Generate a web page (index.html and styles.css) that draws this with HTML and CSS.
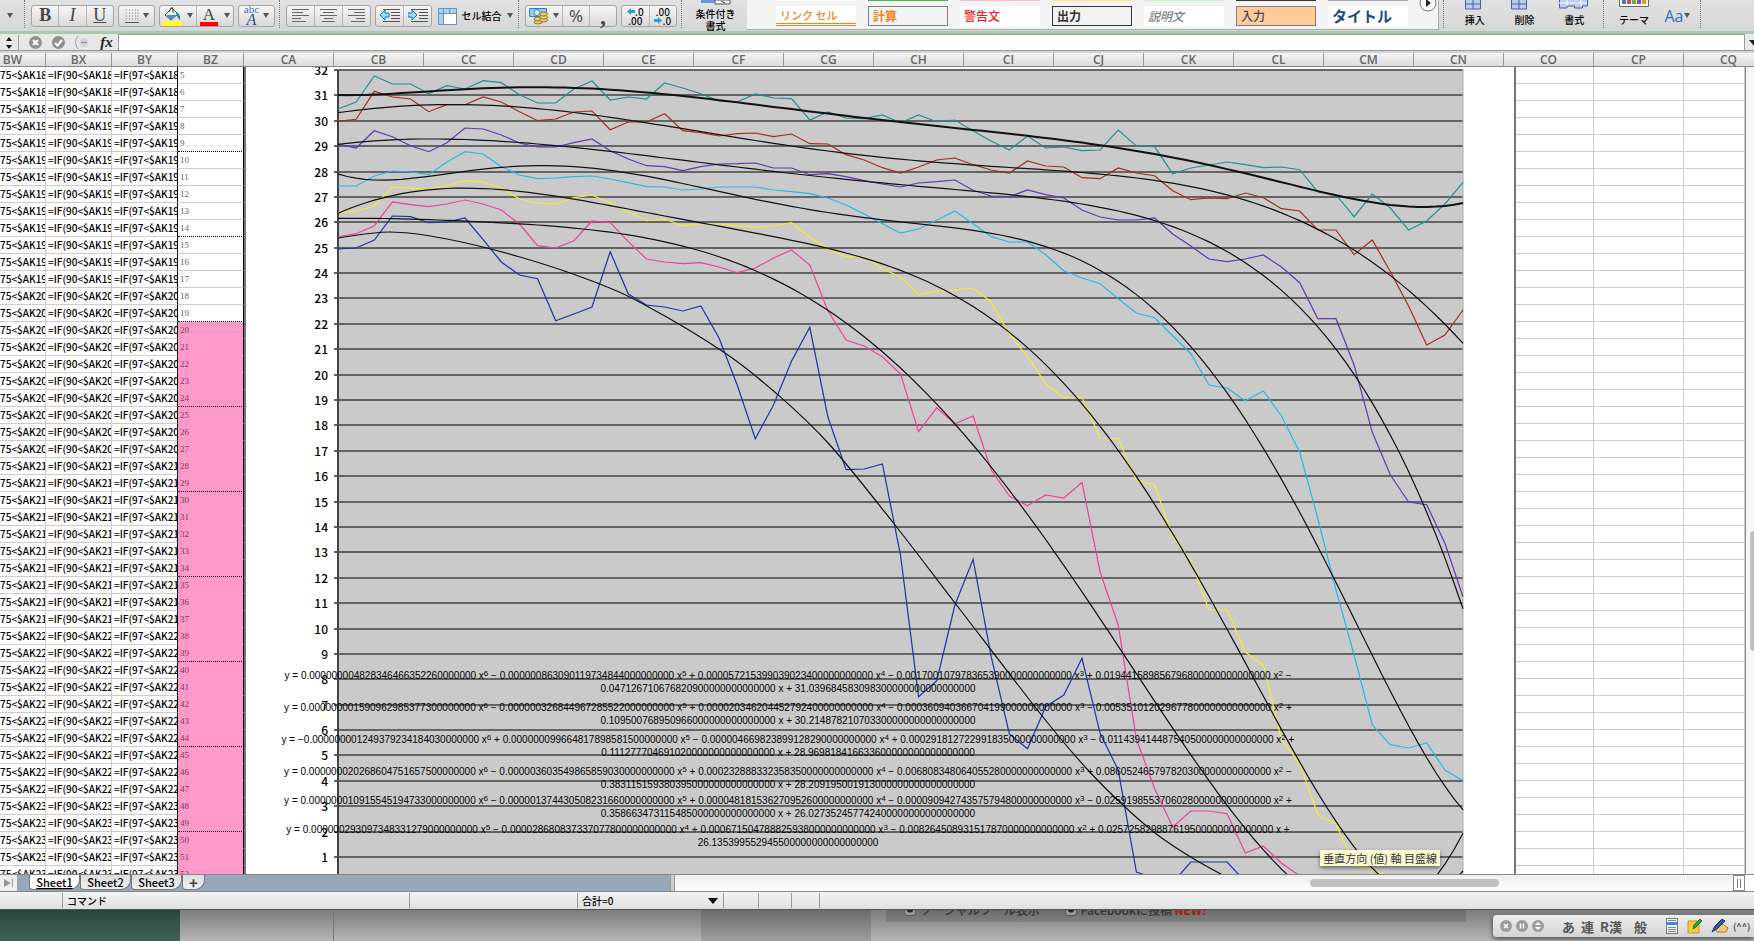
FILE: index.html
```html
<!DOCTYPE html>
<html lang="ja">
<head>
  <meta charset="UTF-8">
  <meta name="viewport" content="width=device-width, initial-scale=1.0">
  <title>Sheet1</title>
  <link rel="stylesheet" href="styles.css">
</head>
<body>

  <!-- Ribbon -->
  <div class="toolbar">
    <button class="plain first" aria-label="More"><span class="caret"></span></button>
    <span class="sep"></span>
    <div class="group g-biu">
      <button class="bold">B</button>
      <button class="italic">I</button>
      <button class="underline">U</button>
    </div>
    <div class="group g-border">
      <button aria-label="Borders">
        <svg width="14" height="14" viewBox="0 0 14 14"><path d="M1 .5v12M4.5 .5v12M7.5 .5v12M10.500 .5v12M13 .5v12" stroke="#777" stroke-dasharray="1 2"/><path d="M0 13.500h14" stroke="#555"/></svg>
        <span class="caret"></span>
      </button>
    </div>
    <div class="group g-fill">
      <button aria-label="Fill color">
        <svg width="20" height="20" viewBox="0 0 20 20"><path d="M3 9l7-7 6 6-7 6z" fill="#f4f4f4" stroke="#444"/><path d="M7 6l2-4q2-2 2 2v3" fill="none" stroke="#444"/><path d="M4 9h11l-6 5z" fill="#4c8fd0"/><path d="M14 6q4 1 4 8q-3-2-4-8" fill="#2a6cb8"/><path d="M0 15h20v5H0z" fill="#ffff30"/></svg>
      </button>
      <button class="narrow" aria-label="Fill options"><span class="caret"></span></button>
      <button class="font-color" aria-label="Font color">A</button>
      <button class="narrow" aria-label="Font color options"><span class="caret"></span></button>
    </div>
    <div class="group g-abc">
      <button class="abc"><span class="abc-text"><small>abc</small><i>A</i></span><span class="caret"></span></button>
    </div>
    <span class="sep"></span>
    <div class="group g-align">
      <button aria-label="Left"><svg width="17" height="15" viewBox="0 0 17 15"><path d="M0 1.500h17M0 4.500h11M0 7.500h17M0 10.500h9M0 13.500h14" stroke="#666"/></svg></button>
      <button aria-label="Center"><svg width="17" height="15" viewBox="0 0 17 15"><path d="M0 1.500h17M3 4.500h11M0 7.500h17M4 10.500h9M2 13.500h13" stroke="#666"/></svg></button>
      <button aria-label="Right"><svg width="17" height="15" viewBox="0 0 17 15"><path d="M0 1.500h17M6 4.500h11M0 7.500h17M8 10.500h9M3 13.500h14" stroke="#666"/></svg></button>
    </div>
    <div class="group g-indent">
      <button aria-label="Outdent"><svg width="20" height="15" viewBox="0 0 20 15"><path d="M3 1.500h17M11 4.500h9M11 7.500h9M11 10.500h9M3 13.500h17" stroke="#555"/><path d="M0 7l5-5v3h4v4H5v3z" fill="#8fe0ff" stroke="#1878b8"/></svg></button>
      <button aria-label="Indent"><svg width="20" height="15" viewBox="0 0 20 15"><path d="M3 1.500h17M11 4.500h9M11 7.500h9M11 10.500h9M3 13.500h17" stroke="#555"/><path d="M9 7L4 2v3H0v4h4v3z" fill="#8fe0ff" stroke="#1878b8"/></svg></button>
    </div>
    <button class="plain merge">
      <svg width="19" height="18" viewBox="0 0 19 18"><path d="M.5 1.500h18v16H.5z" fill="#fff" stroke="#6a90b8"/><path d="M1 2h17v4H1zM1 6h4v11H1z" fill="#a9d2f0"/><path d="M5.500 2v15M1 6.500h17M11.500 2v4" stroke="#6a90b8"/></svg>
      セル結合<span class="caret"></span>
    </button>
    <span class="sep"></span>
    <div class="group g-number">
      <button class="money" aria-label="Currency">
        <svg width="20" height="18" viewBox="0 0 20 18"><path d="M.5 1.500h17v8H.5z" fill="#8ccdf0" stroke="#3a80b8"/><circle cx="8" cy="5.500" r="3" fill="#d9f0fb" stroke="#3a80b8"/><g fill="#e8cf78" stroke="#907020"><ellipse cx="9" cy="15" rx="4" ry="2"/><ellipse cx="9" cy="12" rx="4" ry="2"/><ellipse cx="14.500" cy="13" rx="4" ry="2"/><ellipse cx="14.500" cy="10" rx="4" ry="2"/><ellipse cx="14.500" cy="7" rx="4" ry="2"/></g></svg>
        <span class="caret"></span>
      </button>
      <button class="percent">%</button>
      <button class="comma">,</button>
    </div>
    <div class="group g-decimal">
      <button class="decimal"><span><svg width="8" height="7" viewBox="0 0 8 7"><path d="M0 3.500L4 0v2h4v3H4v2z" fill="#28a0e0"/></svg>.0</span><span>.00</span></button>
      <button class="decimal"><span>.00</span><span><svg width="8" height="7" viewBox="0 0 8 7"><path d="M8 3.500L4 0v2H0v3h4v2z" fill="#28a0e0"/></svg>.0</span></button>
    </div>
    <span class="sep"></span>
    <button class="plain stack conditional">
      <svg width="30" height="5" viewBox="0 0 30 5"><path d="M0 0h14v3H0z" fill="#6d94d4"/><path d="M14 0h15v4H14z" fill="#fff" stroke="#555"/><path d="M20 1l4 2" stroke="#333"/></svg>
      <span>条件付き</span><span>書式</span>
    </button>
    <div class="gallery">
      <span class="edge"></span><span class="edge green"></span><span class="edge pink"></span><span class="edge yellow"></span><span class="edge mint"></span><span class="edge dark"></span><span class="edge gray"></span>
      <button class="style linked">リンク セル</button>
      <button class="style calc">計算</button>
      <button class="style warning">警告文</button>
      <button class="style output">出力</button>
      <button class="style note">説明文</button>
      <button class="style input-style">入力</button>
      <button class="style title-style">タイトル</button>
      <button class="more" aria-label="More styles"><svg width="18" height="18" viewBox="0 0 18 18"><circle cx="9" cy="9" r="8" fill="#fafafa" stroke="#777"/><path d="M7 5l5 4-5 4z" fill="#222"/></svg></button>
    </div>
    <span class="sep"></span>
    <div class="cells">
      <button class="plain stack"><svg width="30" height="11" viewBox="0 0 30 11"><path d="M5.500-1h15v10h-15z" fill="#b9cdf4" stroke="#46629a"/><path d="M13 0v9M5 4h15" stroke="#46629a"/></svg><span>挿入</span></button>
      <button class="plain stack"><svg width="30" height="11" viewBox="0 0 30 11"><path d="M1.500-1h15v10h-15z" fill="#b9cdf4" stroke="#46629a"/><path d="M9 0v9M1 4h15" stroke="#46629a"/></svg><span>削除</span></button>
      <button class="plain stack"><svg width="30" height="11" viewBox="0 0 30 11"><path d="M.5-1h28v7h-5v2h-8V6H8v2H.5z" fill="#b9cdf4" stroke="#46629a"/><path d="M8 0v6M22 0v6M0 3h28" stroke="#fff"/></svg><span>書式</span></button>
    </div>
    <span class="sep"></span>
    <div class="themes">
      <button class="plain stack"><svg width="30" height="11" viewBox="0 0 30 11"><path d="M.5-1h29v7.500H.5z" fill="#fff" stroke="#666"/><path d="M3 0h4v4H3z" fill="#4a78c0"/><path d="M8 0h4v4H8z" fill="#d05040"/><path d="M13 0h4v4h-4z" fill="#70a840"/><path d="M18 0h4v4h-4z" fill="#8050a8"/><path d="M23 0h4v4h-4z" fill="#e89030"/></svg><span>テーマ</span></button>
      <button class="plain fonts">Aa<span class="caret"></span></button>
    </div>
    <span class="sep"></span>
  </div>

  <!-- Formula bar -->
  <div class="formula-bar">
    <button class="stepper" aria-label="Name box"><svg width="6" height="12" viewBox="0 0 6 12"><path d="M0 4l3-4 3 4zM0 8l3 4 3-4z" fill="#111"/></svg></button>
    <button class="round" aria-label="Cancel"><svg width="13" height="13" viewBox="0 0 13 13"><circle cx="6.500" cy="6.500" r="6.500" fill="#909090"/><path d="M4 4l5 5M9 4l-5 5" stroke="#fff" stroke-width="2"/></svg></button>
    <button class="round" aria-label="Enter"><svg width="13" height="13" viewBox="0 0 13 13"><circle cx="6.500" cy="6.500" r="6.500" fill="#909090"/><path d="M3 7l2.500 2.500L10 4" fill="none" stroke="#fff" stroke-width="2"/></svg></button>
    <button class="round" aria-label="Builder"><svg width="15" height="15" viewBox="0 0 15 15"><path d="M4 1Q-1 7.500 4 14" fill="none" stroke="#999"/><circle cx="10" cy="7.500" r="4.500" fill="#d4d4dc"/><path d="M7 7.500h6" stroke="#888"/></svg></button>
    <label class="fx" for="formula">fx</label>
    <input id="formula" class="formula" type="text">
    <button class="expand" aria-label="Expand"><svg width="9" height="6" viewBox="0 0 9 6"><path d="M4 0h10L9 6z" fill="#222"/></svg></button>
  </div>

  <div class="col-heads" id="colHeads"></div>

  <!-- Cells on both sides of the chart object -->
  <div class="sheet">
    <table class="cells-left"><tbody id="leftRows"></tbody></table>
    <div class="chart">
      <svg id="plot" class="plot" width="1268" height="830" viewBox="0 0 1268 830"></svg>
      <div id="equations"></div>
      <div class="tooltip">垂直方向 (値) 軸 目盛線</div>
    </div>
    <table class="cells-right"><tbody id="rightRows"></tbody></table>
    <div class="v-scroll"><div class="v-thumb"></div></div>
  </div>

  <div class="tab-bar">
    <button class="last-sheet" aria-label="Last sheet"><svg width="10" height="8" viewBox="0 0 10 8"><path d="M0 0l7 4-7 4zM8 0h1v8H8z" fill="#999"/></svg></button>
    <div class="tabs">
      <button class="tab active">Sheet1</button>
      <button class="tab">Sheet2</button>
      <button class="tab">Sheet3</button>
      <button class="tab add" aria-label="Add sheet">+</button>
    </div>
    <div class="splitter"></div>
    <div class="h-scroll"><div class="h-thumb"></div></div>
    <div class="grip"></div>
    <div class="corner"></div>
  </div>

  <div class="status">
    <span class="seg s-empty"></span>
    <span class="seg s-command">コマンド</span>
    <span class="seg s-wide"></span>
    <span class="seg s-sum"><select aria-label="集計"><option>合計=0</option></select><span class="caret"></span></span>
    <span class="seg s-a"></span>
    <span class="seg s-b"></span>
    <span class="seg s-c"></span>
    <span class="seg s-rest"></span>
  </div>

  <!-- Whatever shows below the window -->
  <div class="desktop">
    <div class="wall"></div>
    <div class="page-a"></div>
    <div class="page-b"></div>
    <div class="page-c"></div>
    <div class="page-d">
      <div class="share">
        <label><input type="checkbox" checked>ソーシャルツール表示</label>
        <label><input type="checkbox" checked>Facebookに投稿 <b>NEW!</b></label>
      </div>
    </div>
    <div class="ime">
      <button aria-label="Close"><svg width="12" height="12" viewBox="0 0 12 12"><circle cx="6" cy="6" r="6" fill="#9c9ca0"/><path d="M4 4l4 4M8 4L4 8" stroke="#fff" stroke-width="1.500"/></svg></button>
      <button aria-label="Pause"><svg width="12" height="12" viewBox="0 0 12 12"><circle cx="6" cy="6" r="6" fill="#9c9ca0"/><path d="M4.500 3.500v5M7.500 3.500v5" stroke="#fff" stroke-width="1.500"/></svg></button>
      <button aria-label="Resize"><svg width="12" height="12" viewBox="0 0 12 12"><circle cx="6" cy="6" r="6" fill="#9c9ca0"/><path d="M3 5l3-3 3 3zM3 7l3 3 3-3z" fill="#fff"/></svg></button>
      <span class="mode first-mode">あ</span><span class="mode">連</span><span class="mode">R漢</span><span class="mode last-mode">般</span>
      <button class="tool" aria-label="List"><svg width="14" height="16" viewBox="0 0 14 16"><path d="M1.500.5h11v15h-11z" fill="#eee" stroke="#777"/><path d="M1 4h12v3H1z" fill="#3c8ae0"/><path d="M3 2.500h8M3 9.500h8M3 11.500h8M3 13.500h8" stroke="#888"/></svg></button>
      <button class="tool" aria-label="Note"><svg width="16" height="16" viewBox="0 0 16 16"><path d="M1 3h11v12H1z" fill="#f6c940" stroke="#c89820"/><path d="M6 11l1-4 6-6 2 2-6 6z" fill="#3ca040" stroke="#207028"/></svg></button>
      <button class="tool" aria-label="Pen"><svg width="18" height="16" viewBox="0 0 18 16"><path d="M3 9l9-3 5 4-2 4H6z" fill="#efc978" stroke="#a07830"/><path d="M1 14l3-6 7-7 3 2-7 7z" fill="#3858b0" stroke="#203070"/></svg></button>
      <span class="face">(^^)</span>
    </div>
  </div>

  <script src="chart.js"></script>
</body>
</html>
```
FILE: styles.css
```css
* {
  box-sizing: border-box;
}

body {
  margin: 0;
  height: 100vh;
  display: flex;
  flex-direction: column;
  overflow: hidden;
  font-family: "Noto Sans CJK JP", sans-serif;
  font-size: 10px;
  font-weight: 500;
  color: #000;
  background: #9a9a9a;
}

button {
  margin: 0;
  padding: 0;
  border: 0;
  background: none;
  font: inherit;
  color: inherit;
  white-space: nowrap;
  display: flex;
  align-items: center;
  justify-content: center;
}

svg {
  display: block;
  flex: none;
}

/* Ribbon */
.toolbar {
  flex: none;
  display: flex;
  align-items: center;
  gap: 4px;
  height: 31px;
  overflow: hidden;
  background: linear-gradient(#e2e2e2, #d6d6d6);
}

.toolbar > * {
  flex: none;
}

.caret {
  border: 3px solid transparent;
  border-top: 5px solid #555;
  border-bottom: 0;
}

.first {
  width: 20px;
}

.sep {
  width: 3px;
  height: 28px;
  align-self: flex-start;
  border-left: 1px dotted #777;
}

.group {
  display: flex;
  height: 22px;
  border: 1px solid #a4a4a4;
  border-radius: 3px;
  background: linear-gradient(#f6f6f6, #d8d8d8);
}

.group button {
  flex: 1;
  gap: 4px;
  color: #444;
  border-left: 1px solid #b4b4b4;
}

.group button:first-child {
  border-left: 0;
}

.group button.narrow {
  flex: none;
  width: 12px;
  border-left: 0;
}

.g-biu { width: 83px; font-family: "Liberation Serif", serif; font-size: 18px; }
.g-border { width: 37px; }
.g-fill { width: 75px; }
.g-abc { width: 37px; }
.g-align { width: 85px; }
.g-indent { width: 57px; }
.g-number { width: 92px; }
.g-decimal { width: 56px; }

.bold { font-weight: bold; }
.italic { font-style: italic; }
.underline { text-decoration: underline; }

.group .font-color {
  font-family: "Liberation Serif", serif;
  font-size: 17px;
  line-height: 17px;
  background: linear-gradient(#f00, #f00) center bottom / 18px 4px no-repeat;
  align-items: flex-start;
}

.abc-text {
  display: flex;
  flex-direction: column;
  align-items: center;
  font-family: "Liberation Serif", serif;
  font-size: 16px;
  line-height: 13px;
  color: #2a4f86;
}

.abc-text small {
  font-size: 11px;
  line-height: 7px;
  color: #3a78c8;
}

.merge {
  width: 78px;
  gap: 5px;
}

.group .money {
  flex: none;
  width: 36px;
}

.percent {
  font-family: "Open Sans", sans-serif;
  font-size: 17px;
}

.comma {
  font-family: "Liberation Serif", serif;
  font-size: 24px;
  font-weight: bold;
  line-height: 8px;
}

.group .decimal {
  flex-direction: column;
  gap: 0;
  line-height: 9px;
  color: #111;
}

.decimal span {
  display: flex;
  align-items: center;
}

.stack {
  flex-direction: column;
  justify-content: flex-start;
  align-self: flex-start;
  line-height: 12px;
}

.conditional {
  width: 55px;
}

.conditional svg {
  margin-bottom: 3px;
}

.gallery {
  width: 692px;
  height: 30px;
  align-self: flex-start;
  display: grid;
  grid-template-columns: repeat(7, 80px) 20px;
  grid-template-rows: 1px 20px;
  gap: 5px 12px;
  padding-left: 29px;
  background: #f3f3f3;
  border: solid #aaa;
  border-width: 0 1px 1px 0;
}

.edge { background: #fff; }
.edge.green { background: #4cb84c; }
.edge.pink { background: #ffc0c8; }
.edge.yellow { background: #ffe490; }
.edge.mint { background: #c4f0c8; }
.edge.dark { background: #333; }
.edge.gray { background: #aaa; }

.style {
  grid-row: 2;
  height: 20px;
  padding-left: 4px;
  justify-content: flex-start;
  font-size: 12px;
  line-height: 16px;
  background: #fff;
}

.linked { color: #f58220; font-size: 11px; border-bottom: 3px double #f58220; }
.calc { color: #f58220; font-weight: bold; background: #f2f2f2; border: 1px solid #7f7f7f; }
.warning { color: #f02020; }
.output { color: #333; font-weight: bold; background: #f2f2f2; border: 1px solid #333; }
.note { color: #7f7f7f; font-style: italic; }
.input-style { color: #3f3f76; background: #ffcc99; border: 1px solid #7f7f7f; }
.title-style { color: #1f497d; font-size: 15px; font-weight: bold; }

.more {
  grid-column: 8;
  grid-row: 1;
  height: 12px;
  margin-left: -4px;
  align-items: flex-end;
}

.cells {
  width: 149px;
  align-self: flex-start;
  display: flex;
}

.cells button {
  width: 50px;
  gap: 3px;
}

.themes {
  width: 86px;
  align-self: stretch;
  display: flex;
}

.themes .stack {
  width: 48px;
  gap: 3px;
}

.fonts {
  width: 38px;
  font-family: "Open Sans", sans-serif;
  font-size: 16px;
  color: #2f6fc0;
}

/* Formula bar */
.formula-bar {
  flex: none;
  display: flex;
  align-items: center;
  height: 22px;
  border-top: 3px solid #a9c8b0;
  border-bottom: 2px solid #d4d4d4;
  background: #e8e8e8;
  box-shadow: inset 0 -1px #999;
}

.stepper {
  width: 19px;
  height: 16px;
  border-right: 1px solid #999;
}

.round {
  width: 23px;
  margin-left: 5px;
  margin-right: -5px;
}

.fx {
  width: 30px;
  padding-left: 7px;
  text-align: center;
  font: italic bold 15px "Liberation Serif", serif;
  color: #222;
}

.formula {
  flex: 1;
  align-self: stretch;
  min-width: 0;
  padding: 0 4px;
  font: inherit;
  background: #fff;
  border: 1px solid #999;
  outline: 0;
}

.expand {
  width: 9px;
}

/* Column headings */
.col-heads {
  flex: none;
  display: flex;
  height: 14px;
  overflow: hidden;
  background: linear-gradient(#f4f4f4, #dcdcdc);
  border-bottom: 1px solid #888;
  font: 600 12px/14px "Open Sans", sans-serif;
  color: #666;
  text-align: center;
}

.col-heads span {
  flex: none;
  width: 90px;
  border-right: 1px solid #999;
}

.col-heads .w-bw {
  width: 46px;
  padding-right: 20px;
}

.col-heads .w-narrow {
  width: 66px;
}

/* Sheet */
.sheet {
  flex: 1;
  min-height: 0;
  display: flex;
  overflow: hidden;
  background: #fff;
  border-bottom: 1px solid #888;
}

table {
  flex: none;
  align-self: flex-start;
  table-layout: fixed;
  border-collapse: separate;
  border-spacing: 0;
}

td {
  height: 17px;
  padding: 0;
  line-height: 16px;
  white-space: nowrap;
  overflow: hidden;
  border-right: 1px solid #ccc;
  border-bottom: 1px solid #ccc;
}

.cells-left {
  width: 244px;
}

.c-bw { width: 46px; }
.c-formula { width: 66px; padding-left: 2px; }

.cells-left .c-formula + .c-formula {
  border-right-color: #000;
}

.cells-left .c-num {
  width: 66px;
  padding-left: 2px;
  font: 9px/16px "Liberation Serif", serif;
  color: #666;
  border-right-color: #000;
}

.cells-left .c-num.pink {
  background: #ff99c9;
  border-bottom-color: #ff99c9;
  color: #704058;
}

.cells-left .c-num.mark {
  border-bottom: 1px dotted #000;
}

.cells-right {
  flex: 1;
}

.cells-right td:first-child {
  width: 78px;
}

.cells-right td:nth-child(2) {
  width: 90px;
}

.chart {
  flex: none;
  position: relative;
  width: 1272px;
  height: 100%;
  overflow: hidden;
  border: solid #777;
  border-width: 0 2px;
  background: #fff;
}

.plot {
  overflow: hidden;
}

.grid-line {
  stroke: #646464;
  stroke-width: 2;
  shape-rendering: crispEdges;
}

.series,
.trend {
  fill: none;
  stroke-width: 1.2px;
}

.trend {
  stroke: #111;
}

.trend.heavy {
  stroke-width: 2px;
}

.axis-label {
  font-size: 12px;
  text-anchor: end;
}

/* Trendline labels lie over the plot area */
.equation {
  position: absolute;
  left: 0;
  width: 1084px;
  text-align: center;
  white-space: nowrap;
  font-family: "Liberation Sans", sans-serif;
  line-height: 13px;
}

.equation sup {
  font-size: 8px;
  line-height: 0;
  vertical-align: 3px;
}

.tooltip {
  position: absolute;
  right: 74px;
  bottom: 8px;
  padding: 0 3px;
  font-size: 11px;
  font-weight: 400;
  line-height: 16px;
  white-space: nowrap;
  background: rgba(255, 255, 214, 0.92);
  color: #333;
  box-shadow: 0 2px 4px rgba(0, 0, 0, 0.5);
}

.v-scroll {
  flex: none;
  width: 9px;
  border-left: 1px solid #888;
  background: #f6f6f6;
  padding: 464px 0 0 4px;
}

.v-thumb {
  height: 120px;
  border-radius: 4px 0 0 4px;
  background: #c0c0c0;
}

/* Sheet tabs and scroll bar */
.tab-bar {
  flex: none;
  display: flex;
  height: 17px;
  background: #98a7b9;
  border-bottom: 1px solid #888;
}

.last-sheet {
  width: 17px;
  background: #eee;
}

.tabs {
  width: 653px;
  padding-left: 12px;
  display: flex;
}

.tab {
  width: 51px;
  height: 15px;
  border: 1px solid #777;
  border-top: 0;
  border-radius: 0 0 10px 4px;
  background: linear-gradient(#ddd, #f0f0f0);
  font-size: 11px;
}

.tab.active {
  background: #fff;
  text-decoration: underline;
}

.tab.add {
  width: 23px;
  font-size: 15px;
  font-weight: bold;
  color: #444;
}

.splitter {
  width: 5px;
  background: #ccc;
  border: solid #999;
  border-width: 0 1px;
}

.h-scroll {
  flex: 1;
  display: flex;
  justify-content: flex-end;
  padding: 4px 234px 4px 0;
  background: linear-gradient(#eee, #fff);
}

.h-thumb {
  width: 189px;
  border-radius: 4px;
  background: #c0c0c0;
}

.grip {
  width: 12px;
  border: 1px solid #888;
  background: linear-gradient(90deg, #777 1px, transparent 1px 3px, #777 3px 4px, transparent 4px) 3px 3px / 4px 9px no-repeat #fff;
}

.corner {
  width: 9px;
  background: #fff;
}

/* Status bar */
.status {
  flex: none;
  display: flex;
  height: 18px;
  padding: 1px 0;
  background: linear-gradient(#f2f2f2, #dfe0e2);
  border-bottom: 1px solid #555;
}

.seg {
  flex: none;
  padding-left: 4px;
  line-height: 16px;
  border-right: 1px solid #999;
}

.s-empty { width: 63px; }
.s-command { width: 347px; }
.s-wide { width: 168px; }
.s-a { width: 35px; }
.s-b { width: 33px; }
.s-c { width: 28px; }
.s-rest { flex: 1; border: 0; }

.s-sum {
  width: 146px;
  display: flex;
  align-items: center;
}

.s-sum select {
  width: 126px;
  height: 15px;
  padding: 0;
  border: 0;
  appearance: none;
  font: inherit;
  background: none;
}

.s-sum .caret {
  border-width: 6px 5px 0;
  border-top-color: #000;
}

/* Desktop */
.desktop {
  flex: none;
  position: relative;
  display: flex;
  height: 31px;
  overflow: hidden;
  background: linear-gradient(#7c7c7c, #b6b6b6);
}

.wall {
  width: 180px;
  background: linear-gradient(#2c443c, #3f6357);
}

.page-a { width: 154px; border-right: 1px solid #777; }
.page-b { width: 367px; }
.page-c { width: 170px; background: rgba(0, 0, 0, 0.13); }

.page-d {
  flex: 1;
  padding-left: 15px;
}

.share {
  width: 580px;
  height: 12px;
  overflow: hidden;
  display: flex;
  align-items: flex-end;
  gap: 25px;
  padding: 0 0 3px 18px;
  font-size: 12px;
  line-height: 18px;
  color: #333;
  background: rgba(0, 0, 0, 0.13);
}

.share label {
  display: flex;
  align-items: center;
  white-space: pre;
}

.share input {
  width: 12px;
  height: 12px;
  margin: 0 4px 0 0;
  appearance: none;
  border: 1px solid #555;
  border-radius: 3px;
  background: radial-gradient(circle at 50% 40%, #222 3px, transparent 4px) #999;
}

.share b {
  color: #a81818;
}

/* Input palette floating over the desktop */
.ime {
  position: absolute;
  right: 0;
  top: 5px;
  width: 261px;
  height: 22px;
  display: flex;
  align-items: center;
  gap: 4px;
  padding-left: 7px;
  overflow: hidden;
  white-space: nowrap;
  background: linear-gradient(#eee, #d4d4d4);
  border-radius: 4px 0 0 4px;
  box-shadow: 0 2px 5px rgba(0, 0, 0, 0.6);
  color: #555;
}

.mode {
  font-size: 13px;
  font-weight: bold;
  margin-right: 2px;
}

.first-mode { margin-left: 14px; }
.last-mode { margin: 0 14px 0 6px; }
.tool { margin-right: 4px; }

.face {
  margin-left: -4px;
  font-size: 9px;
  font-weight: bold;
}
```
FILE: chart.js
```js
// Column headings
const heads = ['BW', 'BX', 'BY', 'BZ', 'CA', 'CB', 'CC', 'CD', 'CE', 'CF', 'CG', 'CH', 'CI',
  'CJ', 'CK', 'CL', 'CM', 'CN', 'CO', 'CP', 'CQ'];
const colHeads = document.getElementById('colHeads');
heads.forEach((name, i) => {
  const span = document.createElement('span');
  span.textContent = name;
  if (i === 0) span.className = 'w-bw';
  else if (i < 4) span.className = 'w-narrow';
  colHeads.appendChild(span);
});

// Rows left and right of the chart
function addCell(row, text, className) {
  const td = row.insertCell();
  td.textContent = text;
  if (className) td.className = className;
}

const leftRows = document.getElementById('leftRows');
const rightRows = document.getElementById('rightRows');
for (let n = 5; n <= 52; n++) {
  const ref = '$AK' + Math.floor((n + 182) / 10);
  const row = leftRows.insertRow();
  addCell(row, '75<' + ref, 'c-bw');
  addCell(row, '=IF(90<' + ref, 'c-formula');
  addCell(row, '=IF(97<' + ref, 'c-formula');
  addCell(row, n, 'c-num' + (n >= 20 ? ' pink' : '') + (n % 5 === 4 ? ' mark' : ''));

  const right = rightRows.insertRow();
  for (let c = 0; c < 3; c++) addCell(right, '');
}

// Chart geometry
const LEFT = 92;
const RIGHT = 1217;
const TOP = 3;
const STEP = 25.387; // height of one unit on the value axis
const plot = document.getElementById('plot');
const xAt = i => LEFT + i * (RIGHT - LEFT) / 62;
const yAt = v => TOP + (32 - v) * STEP;

function draw(tag, attrs, text) {
  const el = document.createElementNS('http://www.w3.org/2000/svg', tag);
  for (const key in attrs) el.setAttribute(key, attrs[key]);
  if (text) el.textContent = text;
  plot.appendChild(el);
}

draw('rect', { x: LEFT, y: TOP, width: RIGHT - LEFT, height: 830, fill: '#cacaca' });
for (let v = 32; v > 0; v--) {
  const y = Math.round(yAt(v));
  draw('line', { x1: LEFT - 4, x2: RIGHT, y1: y, y2: y, class: 'grid-line' });
  draw('text', { x: LEFT - 10, y: y + 5, class: 'axis-label' }, String(v));
}
draw('line', { x1: LEFT, x2: LEFT, y1: TOP, y2: 830, stroke: '#444', 'stroke-width': 2 });
draw('line', { x1: RIGHT, x2: RIGHT, y1: TOP, y2: 830, stroke: '#aaa' });

// Series, as depth below the top of the axis in thirds of a pixel (offset 30)
const series = {
  '#1b9292': [147, 126, 48, 72, 72, 101, 77, 87, 62, 68, 104, 129, 129, 87, 63, 120, 111, 117, 69, 84, 101,
    123, 126, 102, 114, 116, 180, 156, 174, 176, 165, 188, 165, 185, 180, 213, 243, 270, 228, 264, 261, 272,
    270, 210, 258, 260, 341, 324, 315, 306, 314, 323, 321, 329, 396, 404, 470, 402, 444, 510, 483, 432, 367],
  '#a82a20': [184, 178, 94, 111, 117, 155, 134, 134, 111, 126, 155, 182, 177, 156, 153, 209, 186, 186, 161,
    212, 218, 228, 221, 219, 230, 222, 251, 252, 284, 300, 323, 339, 321, 300, 294, 314, 330, 339, 303, 318,
    321, 353, 356, 324, 339, 347, 392, 419, 414, 416, 399, 413, 446, 453, 510, 510, 584, 540, 635, 738, 855,
    825, 750],
  '#6236b4': [252, 264, 212, 230, 257, 275, 248, 204, 207, 225, 249, 261, 261, 248, 237, 272, 297, 317, 320,
    332, 320, 312, 311, 309, 324, 324, 344, 341, 350, 362, 372, 381, 369, 365, 360, 391, 408, 410, 390, 404,
    414, 450, 471, 480, 480, 474, 522, 558, 597, 605, 597, 585, 621, 668, 776, 776, 915, 1117, 1245, 1326,
    1334, 1450, 1610],
  '#22b8e8': [378, 378, 348, 333, 336, 344, 306, 275, 282, 320, 345, 356, 354, 350, 348, 357, 368, 380, 381,
    390, 387, 381, 381, 381, 390, 395, 401, 414, 435, 462, 491, 519, 507, 480, 453, 491, 530, 546, 546, 584,
    632, 654, 671, 716, 759, 773, 827, 881, 975, 984, 1022, 993, 1068, 1177, 1375, 1590, 1785, 1995, 2054,
    2064, 2049, 2130, 2162],
  '#f6ec30': [457, 453, 438, 381, 384, 389, 375, 362, 366, 384, 417, 429, 432, 413, 405, 429, 456, 482, 477,
    497, 492, 492, 497, 501, 498, 488, 531, 567, 590, 591, 626, 651, 704, 693, 690, 684, 726, 824, 890, 971,
    1014, 1011, 1134, 1136, 1262, 1274, 1430, 1502, 1650, 1650, 1776, 1815, 2040, 2110, 2264, 2292, 2415,
    2430, 2450],
  '#f0409c': [531, 521, 497, 426, 434, 440, 432, 420, 432, 450, 492, 557, 564, 542, 483, 488, 545, 597, 606,
    611, 608, 621, 638, 624, 594, 570, 615, 752, 840, 858, 890, 942, 1115, 1043, 1091, 1068, 1230, 1308,
    1337, 1305, 1314, 1267, 1536, 1695, 2037, 2185, 2301, 2253, 2253, 2261, 2379, 2358, 2410, 2447, 2480],
  '#1a34a8': [567, 564, 540, 468, 470, 488, 486, 474, 539, 606, 645, 656, 782, 762, 741, 575, 702, 735, 741,
    753, 738, 834, 975, 1136, 1035, 903, 802, 1071, 1229, 1227, 1212, 1485, 1910, 1862, 1635, 1498, 1790,
    2022, 2066, 1940, 1905, 1795, 2020, 2130, 2436, 2455, 2468, 2406, 2406, 2406, 2465]
};
for (const color in series) {
  const points = series[color].map((d, i) => xAt(i).toFixed(1) + ',' + (TOP + (d - 30) / 3).toFixed(1));
  draw('polyline', { points: points.join(' '), class: 'series', stroke: color });
}

// Trendlines: sign and coefficient, highest power first; top is the label position
const trends = [
  { top: 602, c: ['0.00000000482834646635226', '-0.000000863090119734844', '0.0000572153990390234',
    '-0.00170010797836539', '0.0194415898567968', '-0.0471267106768209', '31.0396845830983'] },
  { top: 634, c: ['0.0000000015909629853773', '-0.000000326844967285522', '0.0000203462044527924',
    '-0.000360940366704199', '-0.0053510120296778', '0.109500768950966', '30.2148782107033'] },
  { top: 666, c: ['-0.00000000124937923418403', '0.0000000996648178985815', '-0.00000466982389912829',
    '0.000291812722991835', '-0.0114394144875405', '0.11127770469102', '28.9698184166336'] },
  { top: 698, c: ['0.0000000202686047516575', '-0.00000360354986585903', '0.000232888332358350',
    '-0.00680834806405528', '0.0860524657978203', '-0.383115159380395', '28.209195001913'] },
  { top: 727, c: ['0.000000010915545194733', '-0.00000137443050823166', '0.0000481815362709526',
    '-0.0000909427435757948', '-0.0259198553706028', '0.358663473115485', '26.0273524577424'] },
  { top: 756, c: ['0.000000293097348331279', '-0.0000286808373370778', '0.000671504788825938',
    '-0.00826450893151787', '0.0257258298876195', '26.1353995529455'] }
];

// Every coefficient is shown with 30 decimals
function decimals(text) {
  const parts = text.replace('-', '').split('.');
  return parts[0] + '.' + parts[1].padEnd(30, '0');
}

trends.forEach((trend, t) => {
  const points = [];
  for (let x = 1; x <= 63; x += 0.5) {
    const v = trend.c.reduce((sum, c) => sum * x + Number(c), 0);
    points.push(xAt(x - 1).toFixed(1) + ',' + yAt(v).toFixed(1));
  }
  draw('polyline', { points: points.join(' '), class: t === 0 ? 'trend heavy' : 'trend' });

  const degree = trend.c.length - 1;
  let html = 'y = ';
  trend.c.forEach((c, i) => {
    const power = degree - i;
    const negative = c[0] === '-';
    if (i > 0) html += negative ? ' − ' : ' + ';
    else if (negative) html += '−';
    // only five terms fit on the first line
    if (i === 5) html += '<br>';
    html += decimals(c);
    if (power > 1) html += ' x<sup>' + power + '</sup>';
    else if (power === 1) html += ' x';
  });
  const label = document.createElement('div');
  label.className = 'equation';
  label.style.top = trend.top + 'px';
  label.innerHTML = html;
  document.getElementById('equations').appendChild(label);
});

// The lowest trendline carries no label, its points are joined by a smooth curve
const lowest = [[92, 171], [144, 165], [201, 172], [274, 190], [346, 214], [399, 238], [479, 286],
  [531, 327], [583, 377], [649, 458], [709, 536], [797, 650], [841, 702], [879, 740], [913, 769],
  [948, 792], [984, 812]];
let curve = 'M' + lowest[0];
for (let i = 0; i < lowest.length - 1; i++) {
  const before = lowest[Math.max(i - 1, 0)];
  const from = lowest[i];
  const to = lowest[i + 1];
  const after = lowest[Math.min(i + 2, lowest.length - 1)];
  const c1 = [from[0] + (to[0] - before[0]) / 6, from[1] + (to[1] - before[1]) / 6];
  const c2 = [to[0] - (after[0] - from[0]) / 6, to[1] - (after[1] - from[1]) / 6];
  curve += 'C' + c1 + ' ' + c2 + ' ' + to;
}
draw('path', { class: 'trend', d: curve });
```
